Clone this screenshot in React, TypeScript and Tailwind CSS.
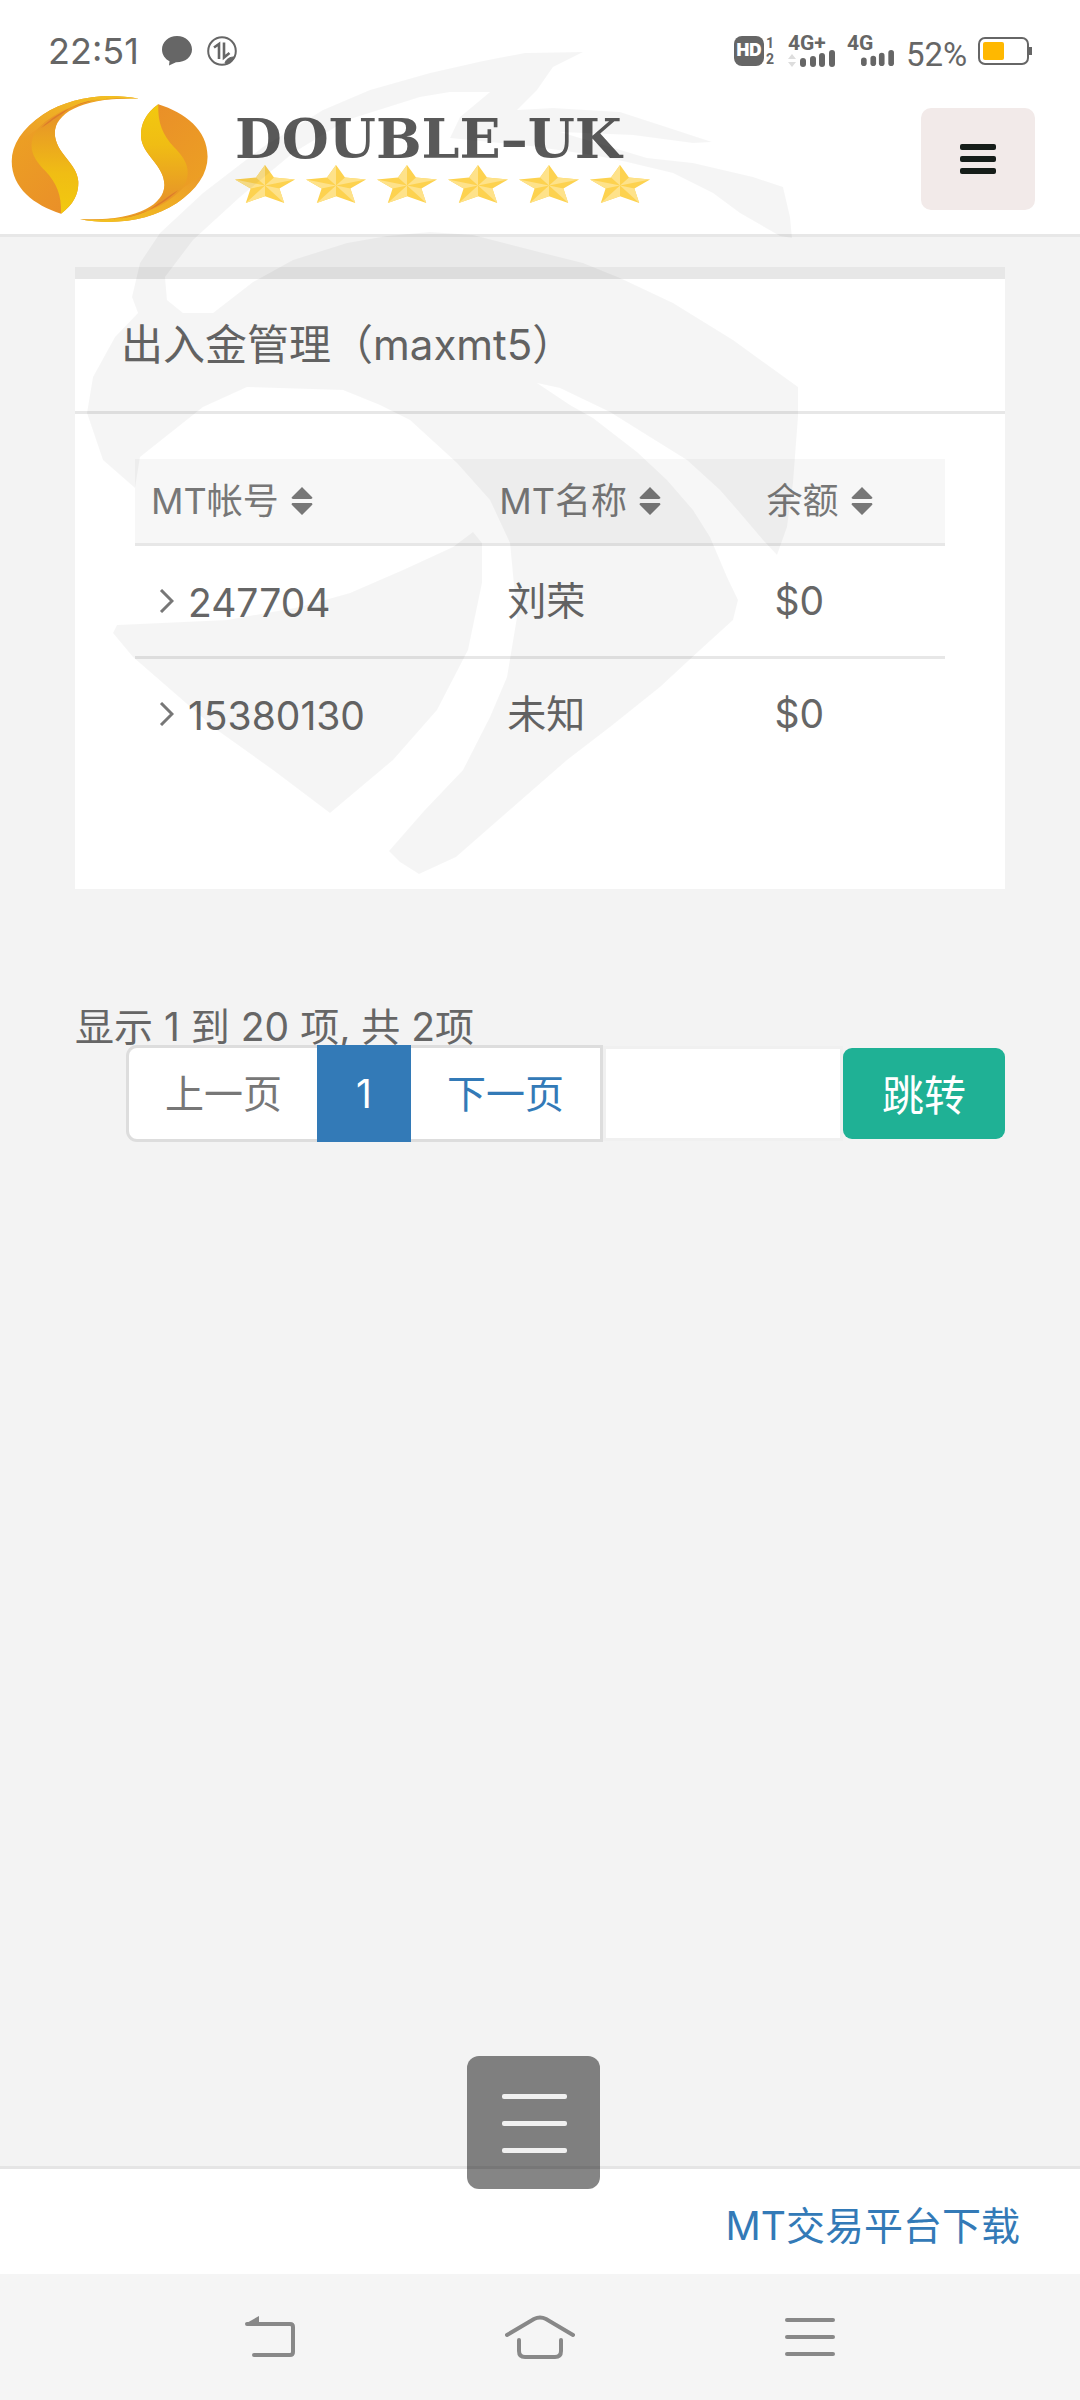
import React from "react";

interface Account {
  login: string;
  name: string;
  balance: string;
}

const accounts: Account[] = [
  { login: "247704", name: "刘荣", balance: "$0" },
  { login: "15380130", name: "未知", balance: "$0" },
];

const columns = [
  { label: "MT帐号", width: "w-[43%]" },
  { label: "MT名称", width: "w-[33%]" },
  { label: "余额", width: "w-[24%]" },
];

const SignalBars = () => (
  <svg width="35" height="17" viewBox="0 0 35 17" fill="#666">
    <rect x="0" y="8" width="6" height="9" rx="3" />
    <rect x="10" y="6" width="6" height="11" rx="3" />
    <rect x="19" y="3" width="6" height="14" rx="3" />
    <rect x="29" y="0" width="6" height="17" rx="3" />
  </svg>
);

const StatusBar = () => (
  <div className="flex h-[86px] items-center justify-between pt-4 pr-[48px] pl-12 text-[#666]">
    <div className="flex items-center">
      <span className="w-[114px] text-[36px] leading-10">22:51</span>
      <svg width="30" height="30" viewBox="0 0 30 30" fill="#666">
        <path d="M15 0C6.5 0 0 6 0 13.5c0 5 3 9.5 7.5 11.8L7 29.5l7-3.2C23 26.5 30 21 30 13.5 30 6 23.5 0 15 0z" />
      </svg>
      <svg
        className="ml-[15px]"
        width="30"
        height="30"
        viewBox="0 0 30 30"
        fill="none"
        stroke="#666"
      >
        <circle cx="15" cy="15" r="13.8" strokeWidth="2" />
        <path d="M7 11.5l5-3.5v15M17 6.5v15l5.5-4.5" strokeWidth="2.6" />
        <path d="M18 27c1-4 5-6 9-6-1 4-4 6-9 6z" fill="#666" strokeWidth="1" />
      </svg>
    </div>

    <div className="flex h-[30px] items-stretch">
      <span className="flex w-[30px] items-center justify-center rounded-lg bg-[#666] text-[17px] font-black text-white">
        HD
      </span>
      <span className="ml-[2px] flex w-[10px] flex-col justify-between font-['Roboto',sans-serif] text-[14px] leading-[14px] font-bold">
        <span>1</span>
        <span>2</span>
      </span>
      <span className="ml-3 flex w-[47px] flex-col items-end justify-between">
        <span className="self-start font-['Roboto',sans-serif] text-[21px] leading-[14px] font-bold">
          4G+
        </span>
        <span className="flex w-full items-end justify-between">
          <svg width="8" height="13" viewBox="0 0 8 13" fill="#ddd">
            <path d="M4 0l4 5H0zM4 13l4-5H0z" />
          </svg>
          <SignalBars />
        </span>
      </span>
      <span className="ml-3 flex w-[48px] flex-col items-end justify-between">
        <span className="self-start font-['Roboto',sans-serif] text-[21px] leading-[14px] font-bold">
          4G
        </span>
        <SignalBars />
      </span>
      <span className="ml-[11px] w-[72px] pt-1 font-['Roboto',sans-serif] text-[33px] leading-[30px]">
        52%
      </span>
      <svg
        className="self-center"
        width="54"
        height="28"
        viewBox="0 0 54 28"
        fill="none"
      >
        <rect x="1" y="1" width="49" height="26" rx="6" stroke="#666" strokeWidth="2" />
        <rect x="5" y="5" width="21" height="18" rx="2" fill="#ffb800" />
        <rect x="51" y="10" width="3" height="8" fill="#666" />
      </svg>
    </div>
  </div>
);

const LogoHalf = () => (
  <>
    <path
      fill="url(#orange)"
      d="M405 292C300 272 200 290 125 340C65 382 35 430 35 480C35 560 100 612 178 637C215 610 230 575 228 540C225 485 160 455 160 395C162 335 240 286 405 292Z"
    />
    <path
      fill="url(#rim)"
      d="M405 292C300 272 200 290 125 340C95 362 65 395 50 425C75 405 90 400 115 378C165 325 250 285 405 292Z"
    />
    <path
      fill="url(#yellow)"
      d="M108 385C75 435 100 475 132 508C165 545 180 580 178 637C215 610 230 575 228 540C225 485 160 455 160 395C161 370 170 352 185 335C150 345 125 365 108 385Z"
    />
    <path
      fill="#dd7a2c"
      d="M405 292C280 282 190 310 120 380C145 365 165 345 185 335C230 295 300 288 405 292Z"
    />
  </>
);

const Logo = () => (
  <svg
    className="h-[130px] w-[200px] shrink-0"
    viewBox="30 278 580 390"
    preserveAspectRatio="none"
    aria-hidden="true"
  >
    <defs>
      <linearGradient id="orange" x1="0" y1="0" x2="1" y2="1">
        <stop offset="0" stopColor="#eda522" />
        <stop offset="1" stopColor="#e8862b" />
      </linearGradient>
      <linearGradient id="rim" x1="0" y1="1" x2="1" y2="0">
        <stop offset="0" stopColor="#eb992a" />
        <stop offset="1" stopColor="#f3c51f" />
      </linearGradient>
      <linearGradient id="yellow" x1="0" y1="0" x2="0" y2="1">
        <stop offset="0" stopColor="#e6912a" />
        <stop offset="0.6" stopColor="#f0bd14" />
        <stop offset="1" stopColor="#f2c90f" />
      </linearGradient>
    </defs>
    <LogoHalf />
    <g transform="rotate(180 319 473)">
      <LogoHalf />
    </g>
  </svg>
);

const Star = () => (
  <svg
    width="60"
    height="38"
    viewBox="0 0 100 100"
    preserveAspectRatio="none"
    aria-hidden="true"
  >
    <path fill="#fdd24f" d="M50 0L65 33L100 38L74 62L82 100L50 82L18 100L26 62L0 38L35 33Z" />
    <path
      fill="#fee28a"
      d="M50 54L50 0L35 33ZM50 54L100 38L65 33ZM50 54L82 100L74 62ZM50 54L18 100L50 82ZM50 54L0 38L26 62Z"
    />
  </svg>
);

const Header = () => (
  <header className="flex h-[151px] items-center justify-between border-b-3 border-[#e7e7e7] pr-[45px] pb-[2px] pl-[10px]">
    <div className="flex items-center gap-[25px]">
      <Logo />
      <div className="flex flex-col">
        <span className="font-['DejaVu_Serif','Liberation_Serif',serif] text-[54px] leading-[48px] font-bold text-[#595959]">
          DOUBLE–UK
        </span>
        <div className="flex gap-[11px] pt-[2px]">
          {Array.from({ length: 6 }, (_, i) => (
            <Star key={i} />
          ))}
        </div>
      </div>
    </div>
    <button
      type="button"
      aria-label="菜单"
      className="flex h-[102px] w-[114px] items-center justify-center rounded-[10px] bg-[#f2eae9]"
    >
      <svg width="36" height="30" viewBox="0 0 36 30" fill="#161d19">
        <rect width="36" height="6" rx="2" />
        <rect y="12" width="36" height="6" rx="2" />
        <rect y="24" width="36" height="6" rx="2" />
      </svg>
    </button>
  </header>
);

const SortIcon = () => (
  <svg width="22" height="28" viewBox="0 0 22 28" fill="#777">
    <path d="M11 0l10 10c1 1 0 2-1 2H2c-1 0-2-1-1-2zM11 28l10-10c1-1 0-2-1-2H2c-1 0-2 1-1 2z" />
  </svg>
);

const AccountTable = () => (
  <table className="w-full table-fixed border-separate border-spacing-0 text-left">
    <thead>
      <tr>
        {columns.map((column) => (
          <th
            key={column.label}
            className={`${column.width} h-[87px] border-b-3 border-[#e7e7e7] bg-[#f7f7f7] p-0 pl-4 text-[36px] leading-10 font-normal text-[#777]`}
          >
            <span className="flex items-center gap-3">
              {column.label}
              <SortIcon />
            </span>
          </th>
        ))}
      </tr>
    </thead>
    <tbody className="text-[39px] leading-[54px] text-[#666]">
      {accounts.map((account) => (
        <tr key={account.login} className="group">
          <td className="h-[113px] border-b-3 border-[#e7e7e7] p-0 pl-6 group-last:border-transparent">
            <span className="flex items-center gap-[14px]">
              <svg
                width="15"
                height="24"
                viewBox="0 0 15 24"
                fill="none"
                stroke="#777"
                strokeWidth="3"
              >
                <path d="M2 1l11 11L2 23" />
              </svg>
              <span className="pt-1">{account.login}</span>
            </span>
          </td>
          <td className="border-b-3 border-[#e7e7e7] p-0 pl-6 group-last:border-transparent">
            {account.name}
          </td>
          <td className="border-b-3 border-[#e7e7e7] p-0 pl-6 group-last:border-transparent">
            {account.balance}
          </td>
        </tr>
      ))}
    </tbody>
  </table>
);

const Pagination = () => (
  <div className="flex items-center pl-[51px] text-[39px] leading-[54px]">
    <button
      type="button"
      disabled
      className="h-[97px] rounded-l-[11px] border-3 border-r-0 border-[#ddd] bg-white pr-[35px] pl-9 text-[#777]"
    >
      上一页
    </button>
    <button type="button" className="h-[97px] w-[94px] bg-[#337ab7] text-white">
      1
    </button>
    <button
      type="button"
      className="h-[97px] border-3 border-l-0 border-[#ddd] bg-white px-9 text-[#337ab7]"
    >
      下一页
    </button>
    <input
      type="text"
      aria-label="页码"
      className="h-[95px] min-w-0 flex-1 border-3 border-[#f0f0f0] bg-white px-4"
    />
    <button
      type="button"
      className="h-[91px] rounded-[9px] bg-[#1fb195] px-[39px] pt-1 text-[42px] text-white"
    >
      跳转
    </button>
  </div>
);

const Footer = () => (
  <footer className="relative flex h-[108px] items-center justify-end border-t-3 border-[#e5e5e5] bg-white pt-2 pr-[60px]">
    <a href="#download" className="text-[39px] leading-[54px] text-[#337ab7]">
      MT交易平台下载
    </a>
    <button
      type="button"
      aria-label="快捷菜单"
      className="absolute bottom-[85px] left-1/2 flex h-[133px] w-[133px] -translate-x-[73px] items-center justify-center rounded-xl bg-black/48 pt-[2px] pl-[2px]"
    >
      <svg width="65" height="59" viewBox="0 0 65 59" fill="#f0f0f0">
        <rect width="65" height="5" rx="2" />
        <rect y="27" width="65" height="5" rx="2" />
        <rect y="54" width="65" height="5" rx="2" />
      </svg>
    </button>
  </footer>
);

const SystemNav = () => (
  <nav className="grid h-[126px] grid-cols-3 bg-[#f5f5f5] px-[135px]">
    <button type="button" aria-label="返回" className="flex items-center justify-center">
      <svg width="52" height="42" viewBox="0 0 52 42" fill="none" stroke="#888" strokeWidth="4">
        <path d="M3 8h43q3 0 3 3v25q0 3-3 3H10" strokeLinecap="round" />
        <path d="M1 8L15 0v8z" fill="#888" stroke="none" />
      </svg>
    </button>
    <button type="button" aria-label="主页" className="flex items-center justify-center">
      <svg
        width="70"
        height="44"
        viewBox="0 0 70 44"
        fill="none"
        stroke="#888"
        strokeWidth="4"
        strokeLinecap="round"
      >
        <path d="M2 20L29 4q6-3 12 0L68 20" />
        <path d="M14 25v11q0 6 6 6h30q6 0 6-6V25" />
      </svg>
    </button>
    <button type="button" aria-label="最近任务" className="flex items-center justify-center">
      <svg width="50" height="38" viewBox="0 0 50 38" fill="#888">
        <rect width="50" height="4" rx="2" />
        <rect y="17" width="50" height="4" rx="2" />
        <rect y="34" width="50" height="4" rx="2" />
      </svg>
    </button>
  </nav>
);

// faint emblem laid over the top of the page
const Watermark = () => (
  <svg
    className="pointer-events-none absolute top-10 left-20"
    width="730"
    height="840"
    viewBox="80 40 730 840"
    fill="#000"
    fillOpacity="0.04"
    aria-hidden="true"
  >
    <path d="M583 52L525 53L483 61L430 73L370 90L323 110L263 147L203 193L160 233L140 263L132 297L138 313L115 337L93 377L87 413L103 460L135 488L140 457L203 407L247 387L343 390L380 405L410 420L457 463L490 500L510 543L517 617L507 677L490 717L463 770L424 811L389 851L400 862L419 874L456 857L567 760L610 727L660 687L700 650L733 620L738 600L727 577L710 537L693 510L667 480L637 452L593 418L570 405L537 383L560 388L610 412L650 437L687 460L720 490L740 513L763 540L777 555L787 527L793 483L798 417L798 387L733 340L673 303L620 278L583 263L543 253L473 235L430 232L387 236L347 243L293 260L253 282L213 313L183 313L167 300L165 277L193 240L240 197L293 153L347 120L420 97L450 92L490 92L460 117L450 138L530 146L593 155L627 162L673 173L713 193L740 213L780 236L792 238L790 217L783 187L753 177L693 163L647 158L560 132L633 135L693 143L712 142L660 125L620 112L553 108L517 110L537 90L553 67Z" />
    <path d="M113 633L117 625L227 620L300 607L350 593L403 570L453 547L473 532L482 543L482 583L468 650L437 710L393 760L330 813L273 770L217 730L133 657Z" />
  </svg>
);

const App = () => {
  return (
    <div className="relative flex min-h-screen flex-col bg-[#f3f3f3] font-['Inter','Noto_Sans_CJK_SC',sans-serif]">
      <div className="bg-white">
        <StatusBar />
        <Header />
      </div>

      <main className="flex-1 px-[75px] pt-[30px]">
        <section className="border-t-12 border-[#e7e7e7] bg-white">
          <h1 className="flex h-[135px] items-center border-b-3 border-[#e7e7e7] pl-[46px] text-[42px] leading-[54px] text-[#666]">
            出入金管理（maxmt5）
          </h1>
          <div className="px-[60px] pt-[45px] pb-[117px]">
            <AccountTable />
          </div>
        </section>

        <p className="mt-[120px] text-[39px] leading-9 text-[#666]">
          显示 1 到 20 项, 共 2项
        </p>
        <Pagination />
      </main>

      <Footer />
      <SystemNav />
      <Watermark />
    </div>
  );
};

export default App;
